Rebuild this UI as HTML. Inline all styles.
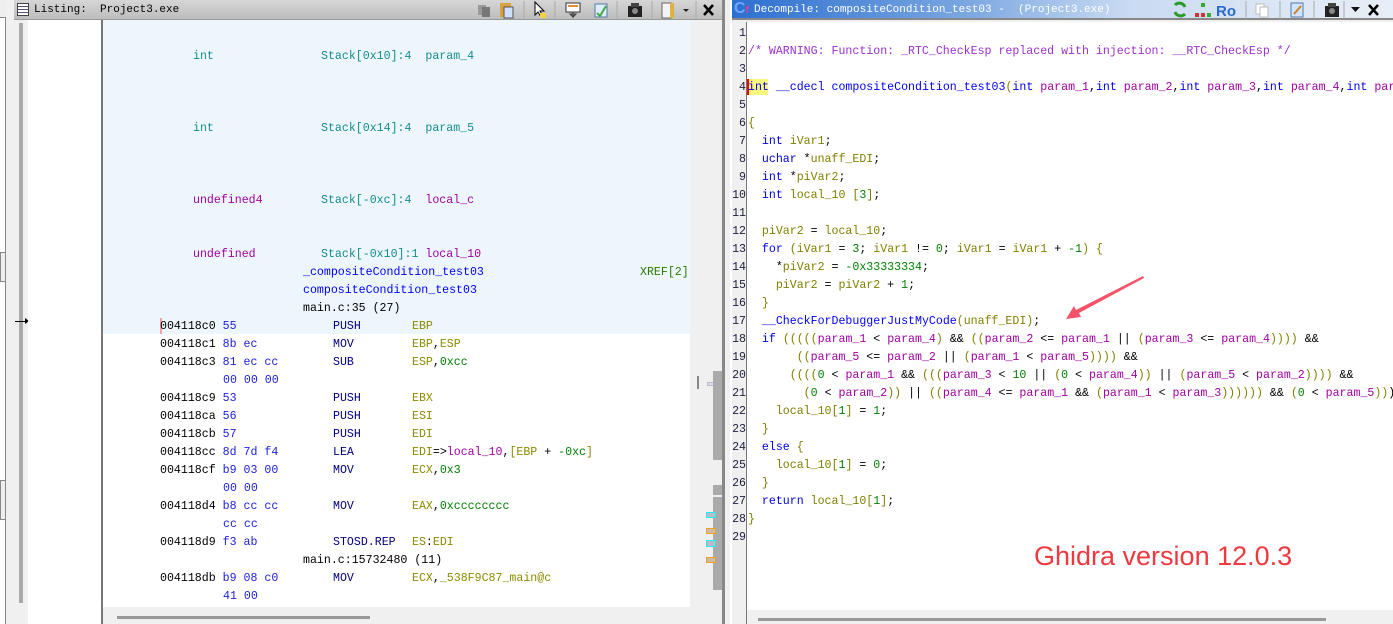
<!DOCTYPE html>
<html><head><meta charset="utf-8"><style>
*{margin:0;padding:0;box-sizing:border-box}
body{width:1393px;height:624px;overflow:hidden;background:#f0f0f0;position:relative;font-family:"Liberation Mono",monospace;font-size:11.6px}
.a{position:absolute;white-space:pre;line-height:18px}
.L .a{margin-top:2px}
.kw{color:#0000e0}.vr{color:#808000}.pm{color:#a000a0}.nm{color:#008000}.fn{color:#0000ff}.cm{color:#9b30d0}.tl{color:#148c8c}.bk{color:#000}
.bt{color:#2020e0}.mn{color:#000080}.rg{color:#8a8a00}
</style></head><body>
<div style="position:absolute;left:0;top:0;width:6px;height:624px;background:#fff;border-right:1px solid #888"></div>
<div style="position:absolute;left:0;top:0;width:6px;height:18px;border-bottom:1px solid #888;background:#eee"></div>
<div style="position:absolute;left:0;top:252px;width:6px;height:30px;border:1px solid #888;background:#eee"></div>
<div style="position:absolute;left:0;top:480px;width:6px;height:40px;border:1px solid #888;background:#eee"></div>
<div style="position:absolute;left:14px;top:0;width:708px;height:20px;background:linear-gradient(#d6d6d6,#bdbdbd);border-bottom:1px solid #999"></div>
<div style="position:absolute;left:17px;top:3px;width:12px;height:13px;border:1px solid #444;background:repeating-linear-gradient(#fff 0 2px,#557 2px 3px)"></div>
<div class="a" style="left:34px;top:1px;font-size:11px;color:#000">Listing:  Project3.exe</div>
<svg style="position:absolute;left:476px;top:1px" width="246" height="18">
<rect x="2" y="4" width="8" height="10" fill="#999"/><rect x="6" y="6" width="8" height="10" fill="#777"/>
<rect x="24" y="2" width="11" height="14" fill="#d9a040"/><rect x="28" y="6" width="9" height="11" fill="#cfe0ff" stroke="#555"/>
<line x1="48" y1="0" x2="48" y2="18" stroke="#aaa"/>
<path d="M59 1 L59 14 L62 11 L65 16 L67 15 L64 10 L68 10 Z" fill="#fff" stroke="#000"/><rect x="64" y="12" width="6" height="5" fill="#f5d040"/>
<line x1="79" y1="0" x2="79" y2="18" stroke="#aaa"/>
<rect x="90" y="2" width="14" height="9" fill="#fff" stroke="#333"/><rect x="92" y="4" width="10" height="2" fill="#e09030"/><path d="M97 11v5l-3-3h6l-3 3" stroke="#333" fill="none"/>
<rect x="119" y="3" width="12" height="13" fill="#ddeeff" stroke="#57a"/><path d="M121 12l3 3 6-10" stroke="#4a4" stroke-width="2" fill="none"/>
<line x1="141" y1="0" x2="141" y2="18" stroke="#aaa"/>
<rect x="152" y="5" width="14" height="11" fill="#222"/><rect x="155" y="2" width="8" height="4" fill="#444"/><circle cx="159" cy="10" r="3" fill="#888"/>
<line x1="176" y1="0" x2="176" y2="18" stroke="#aaa"/>
<rect x="186" y="2" width="9" height="15" fill="#f4f4f4" stroke="#666"/><rect x="194" y="2" width="4" height="15" fill="#e0b040"/>
<path d="M207 8h6l-3 3z" fill="#222"/>
<line x1="220" y1="0" x2="220" y2="18" stroke="#aaa"/>
<path d="M228 4l9 10M237 4l-9 10" stroke="#000" stroke-width="2.5"/>
</svg>
<div style="position:absolute;left:12px;top:20px;width:16px;height:604px;background:#f0f0f0"></div>
<div style="position:absolute;left:19px;top:23px;width:4px;height:580px;background:#aaa"></div>
<div style="position:absolute;left:15px;top:321px;width:13px;height:1px;background:#000"></div>
<div style="position:absolute;left:25px;top:318px;width:0;height:0;border-left:4px solid #000;border-top:3px solid transparent;border-bottom:3px solid transparent"></div>
<div style="position:absolute;left:28px;top:20px;width:73px;height:604px;background:#fff"></div>
<div style="position:absolute;left:101px;top:20px;width:2px;height:604px;background:#777"></div>
<div style="position:absolute;left:103px;top:20px;width:587px;height:587px;background:#fff"></div>
<div style="position:absolute;left:103px;top:20px;width:587px;height:314px;background:#eef6fd"></div>
<div style="position:absolute;left:160px;top:318px;width:2px;height:16px;background:#f4a0a8"></div>
<div class="L">
<div class="a tl" style="left:193px;top:46px">int</div><div class="a tl" style="left:321px;top:46px">Stack[0x10]:4  param_4</div>
<div class="a tl" style="left:193px;top:118px">int</div><div class="a tl" style="left:321px;top:118px">Stack[0x14]:4  param_5</div>
<div class="a pm" style="left:193px;top:190px">undefined4</div><div class="a tl" style="left:321px;top:190px">Stack[-0xc]:4  <span class="pm">local_c</span></div>
<div class="a pm" style="left:193px;top:244px">undefined</div><div class="a tl" style="left:321px;top:244px">Stack[-0x10]:1 <span class="pm">local_10</span></div>
<div class="a fn" style="left:303px;top:262px">_compositeCondition_test03</div><div class="a" style="left:640px;top:262px;color:#2a7a00">XREF[2]</div>
<div class="a fn" style="left:303px;top:280px">compositeCondition_test03</div>
<div class="a bk" style="left:303px;top:298px">main.c:35 (27)</div>
<div class="a bk" style="left:160px;top:316px">004118c0 <span class="bt">55</span></div><div class="a mn" style="left:333px;top:316px">PUSH</div><div class="a rg" style="left:412px;top:316px">EBP</div>
<div class="a bk" style="left:160px;top:334px">004118c1 <span class="bt">8b ec</span></div><div class="a mn" style="left:333px;top:334px">MOV</div><div class="a rg" style="left:412px;top:334px">EBP<span class="bk">,</span>ESP</div>
<div class="a bk" style="left:160px;top:352px">004118c3 <span class="bt">81 ec cc</span></div><div class="a mn" style="left:333px;top:352px">SUB</div><div class="a rg" style="left:412px;top:352px">ESP<span class="bk">,</span><span class="nm">0xcc</span></div>
<div class="a bt" style="left:223px;top:370px">00 00 00</div>
<div class="a bk" style="left:160px;top:388px">004118c9 <span class="bt">53</span></div><div class="a mn" style="left:333px;top:388px">PUSH</div><div class="a rg" style="left:412px;top:388px">EBX</div>
<div class="a bk" style="left:160px;top:406px">004118ca <span class="bt">56</span></div><div class="a mn" style="left:333px;top:406px">PUSH</div><div class="a rg" style="left:412px;top:406px">ESI</div>
<div class="a bk" style="left:160px;top:424px">004118cb <span class="bt">57</span></div><div class="a mn" style="left:333px;top:424px">PUSH</div><div class="a rg" style="left:412px;top:424px">EDI</div>
<div class="a bk" style="left:160px;top:442px">004118cc <span class="bt">8d 7d f4</span></div><div class="a mn" style="left:333px;top:442px">LEA</div><div class="a rg" style="left:412px;top:442px">EDI<span class="bk">=&gt;</span><span class="pm">local_10</span><span class="bk">,</span>[EBP <span class="bk">+</span> <span class="nm">-0xc</span>]</div>
<div class="a bk" style="left:160px;top:460px">004118cf <span class="bt">b9 03 00</span></div><div class="a mn" style="left:333px;top:460px">MOV</div><div class="a rg" style="left:412px;top:460px">ECX<span class="bk">,</span><span class="nm">0x3</span></div>
<div class="a bt" style="left:223px;top:478px">00 00</div>
<div class="a bk" style="left:160px;top:496px">004118d4 <span class="bt">b8 cc cc</span></div><div class="a mn" style="left:333px;top:496px">MOV</div><div class="a rg" style="left:412px;top:496px">EAX<span class="bk">,</span><span class="nm">0xcccccccc</span></div>
<div class="a bt" style="left:223px;top:514px">cc cc</div>
<div class="a bk" style="left:160px;top:532px">004118d9 <span class="bt">f3 ab</span></div><div class="a mn" style="left:333px;top:532px">STOSD.REP</div><div class="a rg" style="left:412px;top:532px">ES<span class="bk">:</span>EDI</div>
<div class="a bk" style="left:303px;top:550px">main.c:15732480 (11)</div>
<div class="a bk" style="left:160px;top:568px">004118db <span class="bt">b9 08 c0</span></div><div class="a mn" style="left:333px;top:568px">MOV</div><div class="a rg" style="left:412px;top:568px">ECX<span class="bk">,</span>_538F9C87_main@c</div>
<div class="a bt" style="left:223px;top:586px">41 00</div>
</div>
<div style="position:absolute;left:117px;top:616px;width:253px;height:3px;background:#999"></div>
<div style="position:absolute;left:697px;top:376px;width:2px;height:13px;background:#888"></div>
<div style="position:absolute;left:707px;top:382px;width:8px;height:4px;background:#dde;border:1px solid #bbc"></div>
<div style="position:absolute;left:713px;top:371px;width:9px;height:89px;background:#aaa"></div>
<div style="position:absolute;left:713px;top:485px;width:9px;height:105px;background:#aaa"></div>
<div style="position:absolute;left:713px;top:495px;width:9px;height:2px;background:#f0f0f0"></div>
<div style="position:absolute;left:706px;top:512px;width:10px;height:6px;background:#bbc;border:1px solid #2ee"></div>
<div style="position:absolute;left:706px;top:528px;width:10px;height:6px;background:#cba;border:1px solid #f0a020"></div>
<div style="position:absolute;left:706px;top:540px;width:10px;height:7px;background:#bbc;border:1px solid #2ee"></div>
<div style="position:absolute;left:706px;top:557px;width:10px;height:6px;background:#cba;border:1px solid #f0a020"></div>
<div style="position:absolute;left:722px;top:0;width:3px;height:624px;background:#888"></div>
<div style="position:absolute;left:730px;top:0;width:2px;height:624px;background:#fff"></div>
<div style="position:absolute;left:732px;top:0;width:661px;height:20px;background:linear-gradient(90deg,#2d6fd0,#7aa6e0 35%,#c9dbf2 60%,#e8eef6);border-bottom:2px solid #888"></div>
<div class="a" style="left:734px;top:0px;font-family:'Liberation Sans',sans-serif;font-size:16px;font-weight:bold;color:#6aa8ff">C<span style="font-size:10px;color:#e040a0">f</span></div>
<div class="a" style="left:754px;top:1px;font-size:11px;color:#fff">Decompile: compositeCondition_test03 -  (Project3.exe)</div>
<svg style="position:absolute;left:1170px;top:1px" width="223" height="18">
<path d="M5 4a6 6 0 0 1 10 2M15 13a6 6 0 0 1-10-2" stroke="#2a9a2a" stroke-width="3" fill="none"/>
<rect x="31" y="2" width="4" height="4" fill="#3a3"/><rect x="25" y="12" width="4" height="4" fill="#c33"/><rect x="31" y="12" width="4" height="4" fill="#c33"/><rect x="37" y="12" width="4" height="4" fill="#3a3"/>
<text x="46" y="15" font-family="Liberation Sans" font-size="15" font-weight="bold" fill="#2a6acc">Ro</text>
<line x1="76" y1="0" x2="76" y2="18" stroke="#aaa"/>
<rect x="86" y="3" width="8" height="10" fill="#fff" stroke="#bbb"/><rect x="90" y="6" width="8" height="10" fill="#fff" stroke="#bbb"/>
<line x1="110" y1="0" x2="110" y2="18" stroke="#aaa"/>
<rect x="121" y="2" width="12" height="14" fill="#cfe4ff" stroke="#57a"/><path d="M124 13l7-8" stroke="#d08020" stroke-width="2"/>
<line x1="144" y1="0" x2="144" y2="18" stroke="#aaa"/>
<rect x="155" y="5" width="14" height="11" fill="#222"/><rect x="158" y="2" width="8" height="4" fill="#444"/><circle cx="162" cy="10" r="3" fill="#888"/>
<line x1="174" y1="0" x2="174" y2="18" stroke="#aaa"/>
<path d="M181 6h9l-4.5 5z" fill="#111"/>
<path d="M199 4l9 10M208 4l-9 10" stroke="#000" stroke-width="2.5"/>
</svg>
<div style="position:absolute;left:732px;top:22px;width:14px;height:602px;background:#f0f0f0"></div>
<div style="position:absolute;left:746px;top:22px;width:1px;height:602px;background:#777"></div>
<div style="position:absolute;left:747px;top:22px;width:646px;height:588px;background:#fff"></div>
<div style="position:absolute;left:748px;top:79px;width:20px;height:16px;background:#f8f880"></div>
<div style="position:absolute;left:747px;top:79px;width:2px;height:16px;background:#e00"></div>
<div class="a bk" style="left:732px;top:25px;width:14px;text-align:right;color:#202040">1
2
3
4
5
6
7
8
9
10
11
12
13
14
15
16
17
18
19
20
21
22
23
24
25
26
27
28
29</div>
<div class="a bk" style="left:748px;top:25px">
<span class="cm">/* WARNING: Function: _RTC_CheckEsp replaced with injection: __RTC_CheckEsp */</span>

<span class="kw">int</span> <span class="kw">__cdecl</span> <span class="fn">compositeCondition_test03</span><span class="vr">(</span><span class="kw">int</span> <span class="pm">param_1</span>,<span class="kw">int</span> <span class="pm">param_2</span>,<span class="kw">int</span> <span class="pm">param_3</span>,<span class="kw">int</span> <span class="pm">param_4</span>,<span class="kw">int</span> <span class="pm">param_5</span>)

<span class="vr">{</span>
  <span class="kw">int</span> <span class="vr">iVar1</span>;
  <span class="kw">uchar</span> *<span class="vr">unaff_EDI</span>;
  <span class="kw">int</span> *<span class="vr">piVar2</span>;
  <span class="kw">int</span> <span class="vr">local_10</span> <span class="vr">[</span><span class="nm">3</span><span class="vr">]</span>;

  <span class="vr">piVar2</span> = <span class="vr">local_10</span>;
  <span class="kw">for</span> <span class="vr">(iVar1</span> = <span class="nm">3</span>; <span class="vr">iVar1</span> != <span class="nm">0</span>; <span class="vr">iVar1</span> = <span class="vr">iVar1</span> + <span class="nm">-1</span><span class="vr">)</span> <span class="vr">{</span>
    *<span class="vr">piVar2</span> = <span class="nm">-0x33333334</span>;
    <span class="vr">piVar2</span> = <span class="vr">piVar2</span> + <span class="nm">1</span>;
  <span class="vr">}</span>
  <span class="fn">__CheckForDebuggerJustMyCode</span><span class="vr">(unaff_EDI)</span>;
  <span class="kw">if</span> <span class="vr">(((((</span><span class="pm">param_1</span> &lt; <span class="pm">param_4</span><span class="vr">)</span> &amp;&amp; <span class="vr">((</span><span class="pm">param_2</span> &lt;= <span class="pm">param_1</span> || <span class="vr">(</span><span class="pm">param_3</span> &lt;= <span class="pm">param_4</span><span class="vr">))))</span> &amp;&amp;
       <span class="vr">((</span><span class="pm">param_5</span> &lt;= <span class="pm">param_2</span> || <span class="vr">(</span><span class="pm">param_1</span> &lt; <span class="pm">param_5</span><span class="vr">))))</span> &amp;&amp;
      <span class="vr">((((</span><span class="nm">0</span> &lt; <span class="pm">param_1</span> &amp;&amp; <span class="vr">(((</span><span class="pm">param_3</span> &lt; <span class="nm">10</span> || <span class="vr">(</span><span class="nm">0</span> &lt; <span class="pm">param_4</span><span class="vr">))</span> || <span class="vr">(</span><span class="pm">param_5</span> &lt; <span class="pm">param_2</span><span class="vr">))))</span> &amp;&amp;
        <span class="vr">(</span><span class="nm">0</span> &lt; <span class="pm">param_2</span><span class="vr">))</span> || <span class="vr">((</span><span class="pm">param_4</span> &lt;= <span class="pm">param_1</span> &amp;&amp; <span class="vr">(</span><span class="pm">param_1</span> &lt; <span class="pm">param_3</span><span class="vr">))))))</span> &amp;&amp; <span class="vr">(</span><span class="nm">0</span> &lt; <span class="pm">param_5</span><span class="vr">))</span>) {
    <span class="vr">local_10[</span><span class="nm">1</span><span class="vr">]</span> = <span class="nm">1</span>;
  <span class="vr">}</span>
  <span class="kw">else</span> <span class="vr">{</span>
    <span class="vr">local_10[</span><span class="nm">1</span><span class="vr">]</span> = <span class="nm">0</span>;
  <span class="vr">}</span>
  <span class="kw">return</span> <span class="vr">local_10[</span><span class="nm">1</span><span class="vr">]</span>;
<span class="vr">}</span>
</div>
<svg style="position:absolute;left:1060px;top:272px" width="90" height="52">
<path d="M83 4 L16 38 L14 34 L6 47 L21 45 L19 41 L84 6 Z" fill="#f55468"/>
</svg>
<div class="a" style="left:1034px;top:538px;font-family:'Liberation Sans',sans-serif;font-size:27px;line-height:36px;color:#f0383f">Ghidra version 12.0.3</div>
<div style="position:absolute;left:747px;top:610px;width:646px;height:14px;background:#f0f0f0"></div>
<div style="position:absolute;left:758px;top:618px;width:568px;height:3px;background:#999"></div>
</body></html>
